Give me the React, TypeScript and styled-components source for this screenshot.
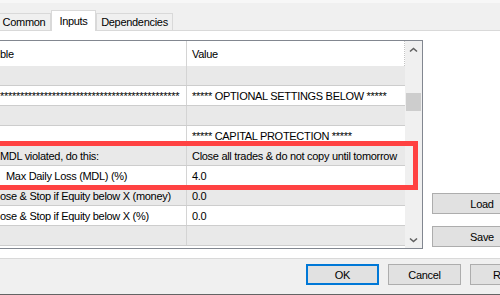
import React from "react";
import styled, { createGlobalStyle } from "styled-components";

const GlobalStyle = createGlobalStyle`
  *, *::before, *::after { box-sizing: border-box; }
  html, body { margin: 0; padding: 0; background: #f0f0f0; }
  body { font-family: "Liberation Sans", Arial, sans-serif; }
`;

type Row = { name: string; value: string; indent?: number };

const rows: Row[] = [
  { name: "", value: "" },
  { name: "*".repeat(45), value: "***** OPTIONAL SETTINGS BELOW *****" },
  { name: "", value: "" },
  { name: "", value: "***** CAPITAL PROTECTION *****" },
  { name: "MDL violated, do this:", value: "Close all trades & do not copy until tomorrow" },
  { name: "Max Daily Loss (MDL) (%)", value: "4.0", indent: 6 },
  { name: "ose & Stop if Equity below X (money)", value: "0.0" },
  { name: "ose & Stop if Equity below X (%)", value: "0.0" },
  { name: "", value: "" },
];

const Chevron: React.FC<{ down?: boolean }> = ({ down }) => (
  <svg width="9" height="6" viewBox="0 0 9 6">
    <polyline
      points={down ? "1,1.5 4.5,4.5 8,1.5" : "1,4.5 4.5,1.5 8,4.5"}
      fill="none"
      stroke="#606060"
      strokeWidth="1.6"
    />
  </svg>
);

const App: React.FC = () => {
  return (
    <Screen>
      <GlobalStyle />
      <Dialog>
        <TopStrip />
        <TabBar>
          <Tab $w={54}>Common</Tab>
          <Tab $w={45} $active>
            Inputs
          </Tab>
          <Tab $w={77}>Dependencies</Tab>
        </TabBar>

        <TabPage>
          <Grid>
            <Table>
              <Header>
                <NameCell>ble</NameCell>
                <ValueCell>Value</ValueCell>
              </Header>
              {rows.map((row, i) => (
                <GridRow key={i} $odd={i % 2 === 0}>
                  <NameCell $indent={row.indent}>{row.name}</NameCell>
                  <ValueCell>{row.value}</ValueCell>
                </GridRow>
              ))}
            </Table>
            <ScrollBar>
              <ArrowButton>
                <Chevron />
              </ArrowButton>
              <Track>
                <Thumb />
              </Track>
              <ArrowButton>
                <Chevron down />
              </ArrowButton>
            </ScrollBar>
            <Highlight />
          </Grid>

          <SidePanel>
            <Button $w={100}>Load</Button>
            <Button $w={100}>Save</Button>
          </SidePanel>
        </TabPage>

        <Footer>
          <Button $w={73} $default>
            OK
          </Button>
          <Button $w={73}>Cancel</Button>
          <Button $w={73}>Reset</Button>
        </Footer>
      </Dialog>
    </Screen>
  );
};

const Screen = styled.div`
  width: 500px;
  height: 295px;
  overflow: hidden;
  background: #f0f0f0;
`;

const Dialog = styled.div`
  width: 560px;
  margin-left: -10px;
  display: flex;
  flex-direction: column;
  font-size: 11px;
  letter-spacing: -0.3px;
  color: #000;
  border-bottom: 1px solid #646464;
`;

const TopStrip = styled.div`
  height: 3px;
  background: #f7f7f7;
`;

const TabBar = styled.div`
  height: 28px;
  display: flex;
  align-items: flex-end;
  padding-left: 7px;
  border-bottom: 1px solid #d9d9d9;
`;

const Tab = styled.div<{ $w: number; $active?: boolean }>`
  width: ${(p) => p.$w}px;
  height: ${(p) => (p.$active ? 21 : 17)}px;
  margin-bottom: ${(p) => (p.$active ? -1 : 0)}px;
  background: ${(p) => (p.$active ? "#ffffff" : "#f0f0f0")};
  border: 1px solid #d9d9d9;
  border-bottom: none;
  display: flex;
  align-items: center;
  justify-content: center;
  white-space: nowrap;
`;

const TabPage = styled.div`
  height: 228px;
  background: #ffffff;
  border-bottom: 1px solid #d9d9d9;
  padding: 9px 0 0 7px;
  display: flex;
  align-items: flex-start;
`;

const Grid = styled.div`
  position: relative;
  width: 426px;
  height: 209px;
  border: 1px solid #828790;
  background: #ffffff;
  display: flex;
`;

const Table = styled.div`
  flex: 1;
  display: flex;
  flex-direction: column;
`;

const Header = styled.div`
  height: 25px;
  display: flex;
  background: #ffffff;
  border-right: 1px dotted #c4c4c4;
`;

const GridRow = styled.div<{ $odd: boolean }>`
  height: 20px;
  display: flex;
  background: ${(p) => (p.$odd ? "#e9e9e9" : "#ffffff")};
  border-bottom: 1px solid #cdcdcd;
`;

const NameCell = styled.div<{ $indent?: number }>`
  width: 189px;
  flex: none;
  display: flex;
  align-items: center;
  padding-left: ${(p) => 2 + (p.$indent ?? 0)}px;
  border-right: 1px solid #d4d4d4;
  white-space: nowrap;
  overflow: hidden;
`;

const ValueCell = styled.div`
  flex: 1;
  display: flex;
  align-items: center;
  padding-left: 5px;
  white-space: nowrap;
  overflow: hidden;
`;

const ScrollBar = styled.div`
  width: 17px;
  flex: none;
  display: flex;
  flex-direction: column;
  background: #f0f0f0;
`;

const ArrowButton = styled.div`
  height: 17px;
  display: flex;
  align-items: center;
  justify-content: center;
`;

const Track = styled.div`
  flex: 1;
`;

const Thumb = styled.div`
  width: 15px;
  height: 18px;
  margin: 35px 0 0 1px;
  background: #cdcdcd;
`;

const Highlight = styled.div`
  position: absolute;
  top: 100px;
  left: -30px;
  right: 4px;
  height: 49px;
  border: 5px solid #ff4242;
  pointer-events: none;
`;

const SidePanel = styled.div`
  flex: 1;
  height: 209px;
  display: flex;
  flex-direction: column;
  justify-content: flex-end;
  gap: 12px;
  padding: 0 0 2px 9px;
`;

const Button = styled.div<{ $w: number; $default?: boolean }>`
  width: ${(p) => p.$w}px;
  height: 21px;
  flex: none;
  display: flex;
  align-items: center;
  justify-content: center;
  background: #e1e1e1;
  border: ${(p) => (p.$default ? "2px solid #0078d7" : "1px solid #adadad")};
  white-space: nowrap;
`;

const Footer = styled.div`
  height: 35px;
  display: flex;
  justify-content: flex-end;
  align-items: flex-start;
  gap: 9px;
  padding: 5px 7px 0 0;
`;

export default App;
